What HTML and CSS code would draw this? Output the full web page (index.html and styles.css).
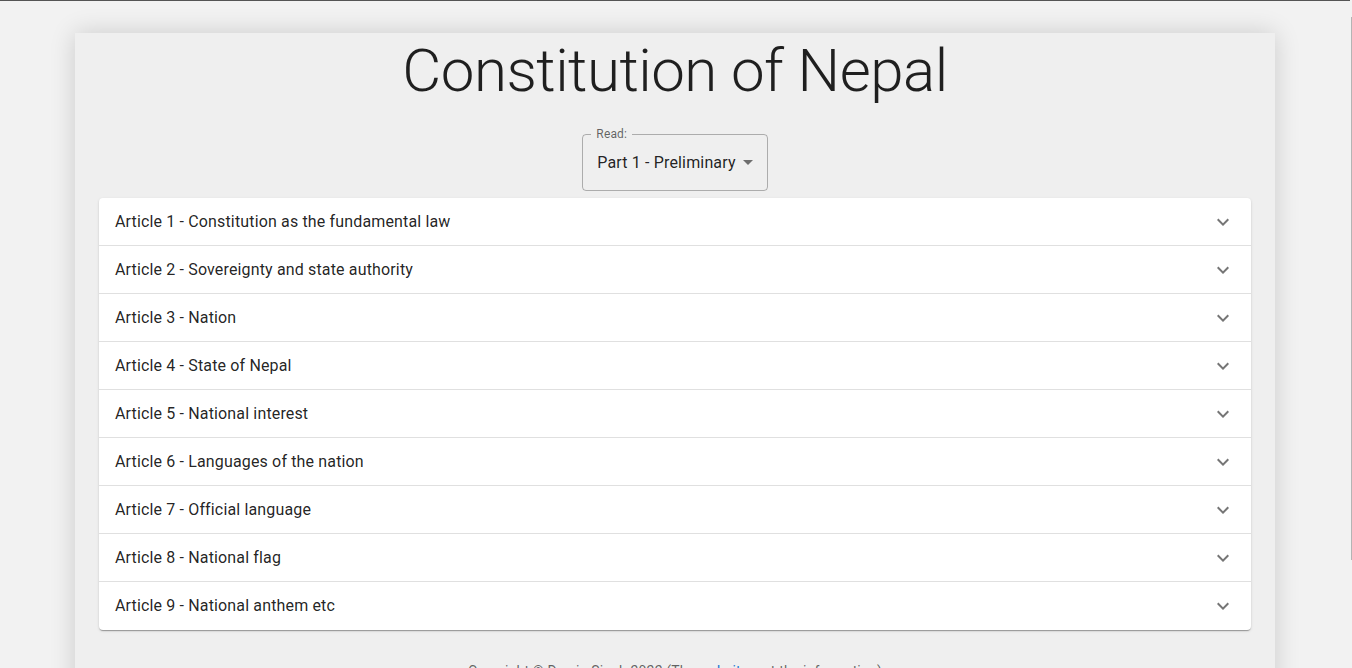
FILE: index.html
```html
<!DOCTYPE html>
<html lang="en">
<head>
<meta charset="utf-8">
<title>Constitution of Nepal</title>
<link rel="stylesheet" href="styles.css">
</head>
<body>
<div class="topline"></div>
<main class="page">
  <h1 class="title">Constitution of Nepal</h1>
  <div class="picker">
    <fieldset class="select">
      <legend class="select-label">Read:</legend>
      <span class="select-value">Part 1 - Preliminary</span>
      <svg class="select-arrow" viewBox="0 0 24 24" width="24" height="24"><path d="M7 10l5 5 5-5z"/></svg>
    </fieldset>
  </div>
  <section class="accordion">
    <div class="row"><span>Article 1 - Constitution as the fundamental law</span><svg class="chev" viewBox="0 0 24 24"><path d="M16.59 8.59 12 13.17 7.41 8.59 6 10l6 6 6-6z"/></svg></div>
    <div class="row"><span>Article 2 - Sovereignty and state authority</span><svg class="chev" viewBox="0 0 24 24"><path d="M16.59 8.59 12 13.17 7.41 8.59 6 10l6 6 6-6z"/></svg></div>
    <div class="row"><span>Article 3 - Nation</span><svg class="chev" viewBox="0 0 24 24"><path d="M16.59 8.59 12 13.17 7.41 8.59 6 10l6 6 6-6z"/></svg></div>
    <div class="row"><span>Article 4 - State of Nepal</span><svg class="chev" viewBox="0 0 24 24"><path d="M16.59 8.59 12 13.17 7.41 8.59 6 10l6 6 6-6z"/></svg></div>
    <div class="row"><span>Article 5 - National interest</span><svg class="chev" viewBox="0 0 24 24"><path d="M16.59 8.59 12 13.17 7.41 8.59 6 10l6 6 6-6z"/></svg></div>
    <div class="row"><span>Article 6 - Languages of the nation</span><svg class="chev" viewBox="0 0 24 24"><path d="M16.59 8.59 12 13.17 7.41 8.59 6 10l6 6 6-6z"/></svg></div>
    <div class="row"><span>Article 7 - Official language</span><svg class="chev" viewBox="0 0 24 24"><path d="M16.59 8.59 12 13.17 7.41 8.59 6 10l6 6 6-6z"/></svg></div>
    <div class="row"><span>Article 8 - National flag</span><svg class="chev" viewBox="0 0 24 24"><path d="M16.59 8.59 12 13.17 7.41 8.59 6 10l6 6 6-6z"/></svg></div>
    <div class="row"><span>Article 9 - National anthem etc</span><svg class="chev" viewBox="0 0 24 24"><path d="M16.59 8.59 12 13.17 7.41 8.59 6 10l6 6 6-6z"/></svg></div>
  </section>
  <footer class="footer">Copyright © Dravin Singh 2022 (The <a class="link" href="#">website</a>, not the information)</footer>
</main>
<div class="scroll-edge"></div>
</body>
</html>
```
FILE: styles.css
```css
html, body {
  margin: 0;
  padding: 0;
}
body {
  background: #f2f2f2;
  font-family: Roboto, "Liberation Sans", Arial, sans-serif;
  color: rgba(0, 0, 0, 0.87);
  padding-right: 2px;
}
.topline {
  height: 1px;
  background: #555555;
}
.page {
  width: 1200px;
  margin: 32px auto 0;
  box-sizing: border-box;
  padding: 0 24px 40px;
  background: #efefef;
  box-shadow: 0 0 24px rgba(0, 0, 0, 0.16);
  display: flex;
  flex-direction: column;
  align-items: stretch;
}
.title {
  margin: 6px 0 0;
  font-size: 60px;
  line-height: 64px;
  font-weight: 300;
  letter-spacing: -0.5px;
  text-align: center;
  color: rgba(0, 0, 0, 0.87);
}
.picker {
  display: flex;
  justify-content: center;
  margin-top: 24px;
}
.select {
  margin: 0;
  padding: 0 31px 0 14px;
  min-width: 0;
  height: 64px;
  box-sizing: border-box;
  border: 1px solid rgba(0, 0, 0, 0.28);
  border-radius: 4px;
  display: flex;
  align-items: center;
  position: relative;
}
.select-label {
  margin-left: -6px;
  padding: 0 5px;
  font-size: 12px;
  line-height: 14px;
  letter-spacing: 0.15px;
  color: rgba(0, 0, 0, 0.6);
}
.select-value {
  font-size: 16px;
  line-height: 23px;
  letter-spacing: 0.15px;
  margin-top: -6px;
  white-space: nowrap;
}
.select-arrow {
  position: absolute;
  right: 7px;
  top: 9px;
  fill: rgba(0, 0, 0, 0.54);
}
.accordion {
  margin-top: 7px;
  padding-bottom: 1px;
  background: #ffffff;
  border-radius: 4px;
  box-shadow: 0 2px 1px -1px rgba(0,0,0,0.2), 0 1px 1px 0 rgba(0,0,0,0.14), 0 1px 3px 0 rgba(0,0,0,0.12);
}
.row {
  height: 48px;
  box-sizing: border-box;
  padding: 0 16px;
  display: flex;
  align-items: center;
  justify-content: space-between;
  font-size: 16px;
  letter-spacing: 0.15px;
  border-top: 1px solid rgba(0, 0, 0, 0.12);
}
.row:first-child {
  border-top: none;
  height: 47px;
}
.chev {
  width: 24px;
  height: 24px;
  fill: rgba(0, 0, 0, 0.54);
}
.footer {
  margin-top: 31px;
  text-align: center;
  font-size: 14px;
  line-height: 20px;
  letter-spacing: 0.15px;
  color: rgba(0, 0, 0, 0.6);
}
.link {
  color: #1976d2;
  text-decoration: none;
}
.scroll-edge {
  position: fixed;
  right: 0;
  top: 17px;
  width: 1px;
  height: 543px;
  background: #b4b4b4;
}
```
